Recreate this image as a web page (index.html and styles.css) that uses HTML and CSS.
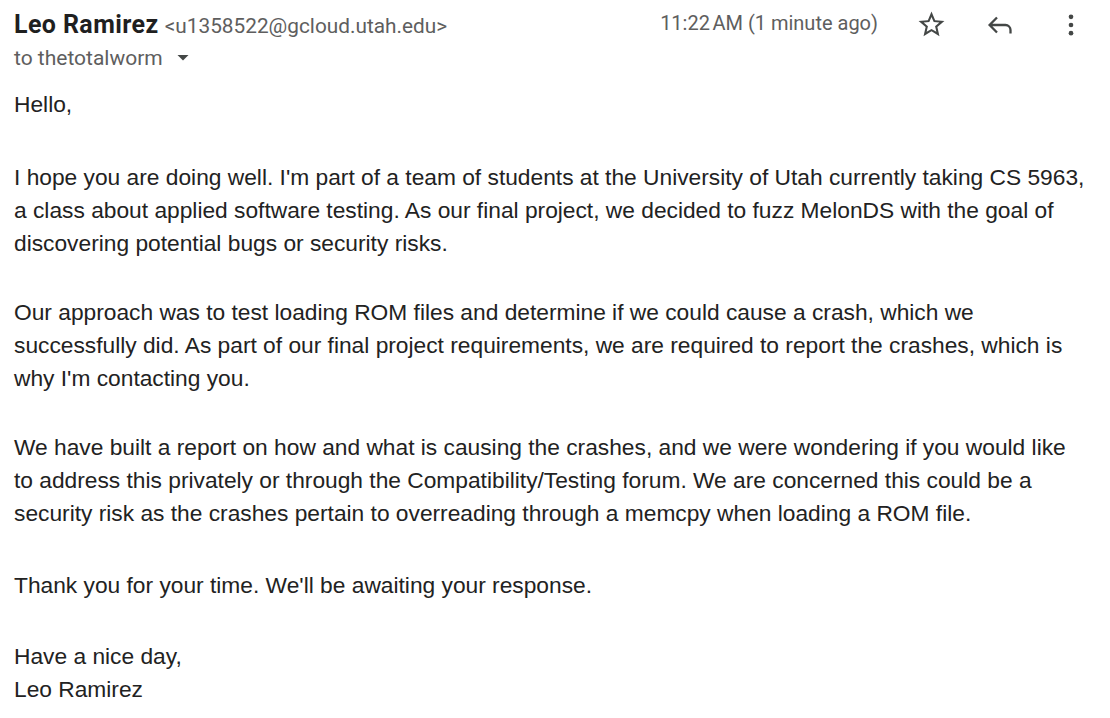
FILE: index.html
```html
<!DOCTYPE html>
<html>
<head>
<meta charset="utf-8">
<link rel="stylesheet" href="styles.css">
</head>
<body>
<div class="mail">
  <div class="head">
    <div class="who">
      <div class="from"><span class="name">Leo Ramirez</span> <span class="addr">&lt;u1358522@gcloud.utah.edu&gt;</span></div>
      <div class="to">to thetotalworm <svg class="caret" width="12" height="12" viewBox="0 0 12 12"><path d="M0.5 3h11L6 8.5z" fill="#444746"/></svg></div>
    </div>
    <div class="meta">
      <span class="time">11:22&#8239;AM (1 minute ago)</span>
      <svg class="ic star" width="31" height="31" viewBox="0 0 24 24"><path fill="#444746" d="M22 9.24l-7.19-.62L12 2 9.19 8.63 2 9.24l5.46 4.73L5.82 21 12 17.27 18.18 21l-1.63-7.03L22 9.24zM12 15.4l-3.76 2.27 1-4.28-3.32-2.88 4.38-.38L12 6.1l1.71 4.04 4.38.38-3.32 2.88 1 4.28L12 15.4z"/></svg>
      <svg class="ic reply" width="32" height="32" viewBox="0 0 32 32"><path fill="none" stroke="#444746" stroke-width="2.3" stroke-linejoin="miter" d="M12 8.5L4.6 16 12 23.5M4.6 16H20.5a5 5 0 0 1 5 5V24.5"/></svg>
      <svg class="ic more" width="28" height="28" viewBox="0 0 24 24"><circle cx="12" cy="5" r="2" fill="#444746"/><circle cx="12" cy="12" r="2" fill="#444746"/><circle cx="12" cy="19" r="2" fill="#444746"/></svg>
    </div>
  </div>
  <div class="body">
    <p class="greet">Hello,</p>
    <p>I hope you are doing well. I'm part of a team of students at the University of Utah currently taking CS 5963, a class about applied software testing. As our final project, we decided to fuzz MelonDS with the goal of discovering potential bugs or security risks.</p>
    <p>Our approach was to test loading ROM files and determine if we could cause a crash, which we successfully did. As part of our final project requirements, we are required to report the crashes, which is why I'm contacting you.</p>
    <p class="report">We have built a report on how and what is causing the crashes, and we were wondering if you would like to address this privately or through the Compatibility/Testing forum. We are concerned this could be a security risk as the crashes pertain to overreading through a memcpy when loading a ROM file.</p>
    <p class="thanks">Thank you for your time. We'll be awaiting your response.</p>
    <p>Have a nice day,<br>Leo Ramirez</p>
  </div>
</div>
</body>
</html>
```
FILE: styles.css
```css
html, body { margin: 0; padding: 0; background: #fff; }
.mail { padding: 0 0 0 14px; }
.head { display: flex; justify-content: space-between; align-items: flex-start; padding: 8.5px 25px 0 0; }
.who { font-family: Roboto, "Noto Sans", sans-serif; }
.from { font-size: 25px; line-height: 32px; color: #1f1f1f; white-space: nowrap; }
.name { font-weight: 700; letter-spacing: 0.4px; }
.addr { font-size: 20.8px; color: #5e5e5e; }
.to { font-size: 21px; line-height: 28px; color: #5e5e5e; margin-top: 2.3px; display: flex; align-items: center; gap: 14px; }
.caret { margin-top: 1px; }
.meta { display: flex; align-items: center; height: 32px; font-family: Roboto, "Noto Sans", sans-serif; color: #5e5e5e; font-size: 20px; }
.time { line-height: 24px; margin-right: 37.5px; margin-bottom: 3px; white-space: nowrap; }
.ic { display: block; flex: none; }
.star { margin-right: 38.5px; }
.reply { margin-right: 40px; }
.body { font-family: "Liberation Sans", Arial, sans-serif; font-size: 22.75px; line-height: 33px; color: #222; margin-top: 16.3px; padding-right: 24px; }
.body p { margin: 0 0 36px 0; }
.body p.greet { margin-bottom: 40px; }
.body p.report { margin-bottom: 39px; }
.body p.thanks { margin-bottom: 38px; }
```
